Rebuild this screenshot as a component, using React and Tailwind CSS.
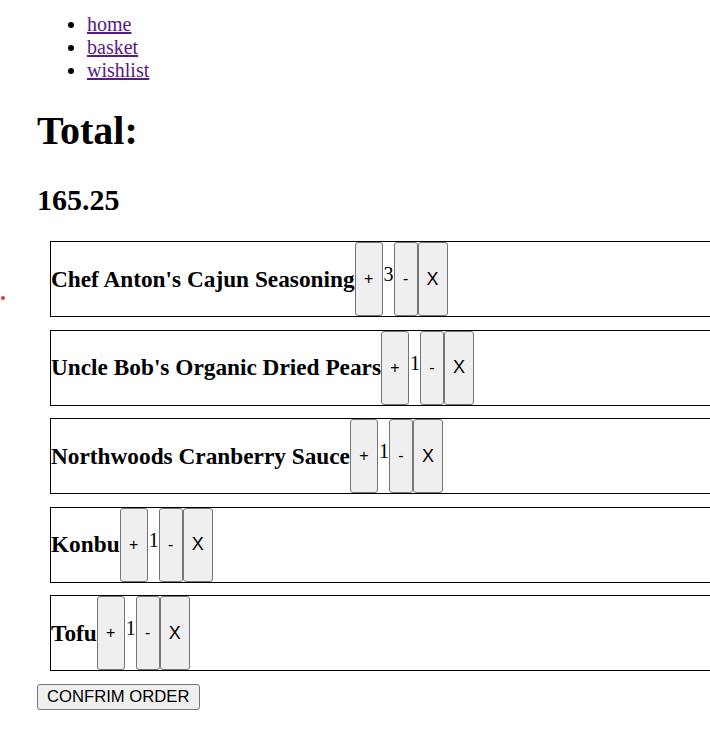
import React from "react";

const items = [
  { name: "Chef Anton's Cajun Seasoning", qty: 3 },
  { name: "Uncle Bob's Organic Dried Pears", qty: 1 },
  { name: "Northwoods Cranberry Sauce", qty: 1 },
  { name: "Konbu", qty: 1 },
  { name: "Tofu", qty: 1 },
];

const btn =
  "bg-[#efefef] border border-[#767676] rounded-[3px] text-black flex items-center justify-center font-['Liberation_Sans',Arial,sans-serif]";

export default function App() {
  return (
    <div className="relative w-[710px] h-[735px] overflow-hidden bg-white text-black font-['Liberation_Serif','Times_New_Roman',serif]">
      <div className="absolute left-[1px] top-[296px] w-[4px] h-[4px] rounded-full bg-[#e53935]" />
      <div className="pl-[37px] pt-[13px]">
        <ul className="list-disc pl-[50px] text-[20px] leading-[23px]">
          <li><a href="#" className="text-[#551a8b] underline">home</a></li>
          <li><a href="#" className="text-[#551a8b] underline">basket</a></li>
          <li><a href="#" className="text-[#551a8b] underline">wishlist</a></li>
        </ul>
        <h1 className="text-[40px] font-bold leading-[46px] mt-[26px]">Total:</h1>
        <h2 className="text-[30px] font-bold leading-[34px] mt-[29px]">165.25</h2>
        <div className="ml-[13px] mt-[24px] flex flex-col gap-[12.5px]">
          {items.map((it) => (
            <div key={it.name} className="w-[680px] h-[76px] border border-black flex items-stretch">
              <h3 className="self-center text-[23.3px] font-bold leading-[27px] whitespace-nowrap">{it.name}</h3>
              <button className={btn + " w-[28px] text-[16px]"}>+</button>
              <span className="text-[20px] leading-[20px] mt-[22px] ml-[1px]">{it.qty}</span>
              <button className={btn + " w-[24px] text-[16px]"}>-</button>
              <button className={btn + " w-[30px] text-[18px]"}>X</button>
            </div>
          ))}
        </div>
        <button className="mt-[13px] h-[26px] px-[9px] bg-[#efefef] border border-[#767676] rounded-[3px] text-[16.67px] leading-[18px] font-['Liberation_Sans',Arial,sans-serif]">
          CONFRIM ORDER
        </button>
      </div>
    </div>
  );
}
